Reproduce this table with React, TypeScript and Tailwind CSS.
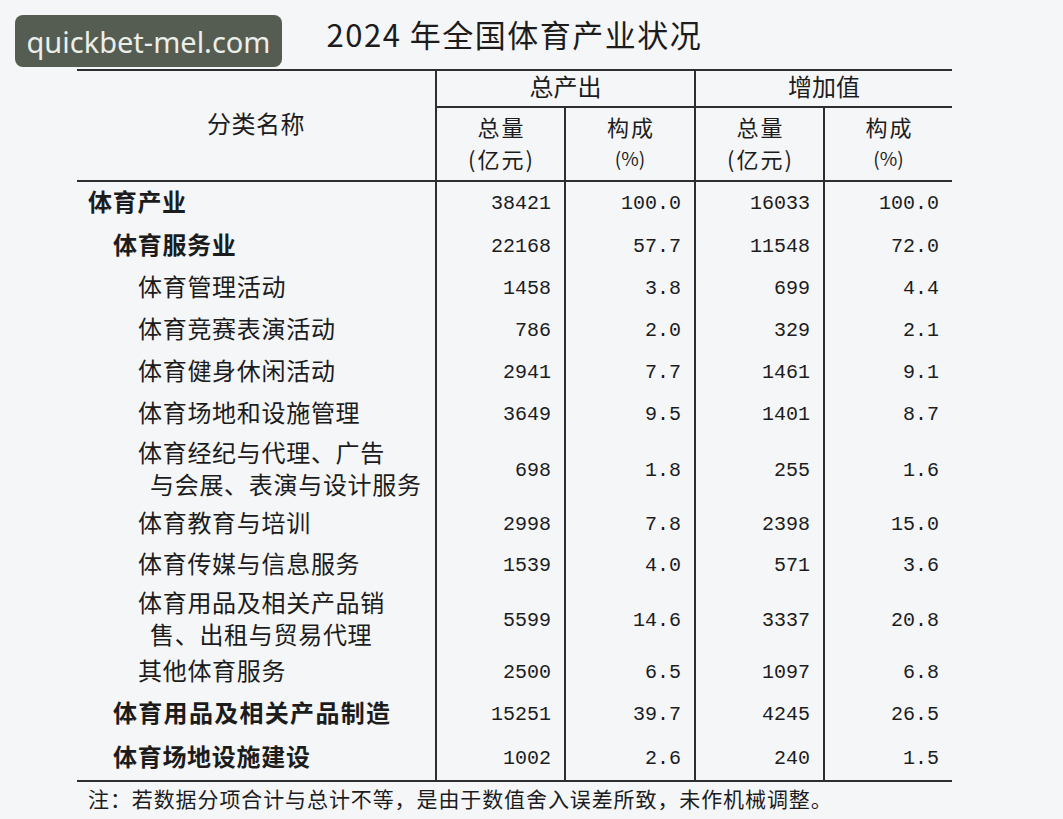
import React from 'react'

interface Row {
  name: string[]
  level: 0 | 1 | 2
  bold?: boolean
  values: string[]
  h: string
}

const rows: Row[] = [
  { name: ['体育产业'], level: 0, bold: true, values: ['38421', '100.0', '16033', '100.0'], h: 'h-[44px]' },
  { name: ['体育服务业'], level: 1, bold: true, values: ['22168', '57.7', '11548', '72.0'], h: 'h-[42px]' },
  { name: ['体育管理活动'], level: 2, values: ['1458', '3.8', '699', '4.4'], h: 'h-[42px]' },
  { name: ['体育竞赛表演活动'], level: 2, values: ['786', '2.0', '329', '2.1'], h: 'h-[42px]' },
  { name: ['体育健身休闲活动'], level: 2, values: ['2941', '7.7', '1461', '9.1'], h: 'h-[42px]' },
  { name: ['体育场地和设施管理'], level: 2, values: ['3649', '9.5', '1401', '8.7'], h: 'h-[42px]' },
  { name: ['体育经纪与代理、广告', '与会展、表演与设计服务'], level: 2, values: ['698', '1.8', '255', '1.6'], h: 'h-[68px]' },
  { name: ['体育教育与培训'], level: 2, values: ['2998', '7.8', '2398', '15.0'], h: 'h-[41px]' },
  { name: ['体育传媒与信息服务'], level: 2, values: ['1539', '4.0', '571', '3.6'], h: 'h-[41px]' },
  { name: ['体育用品及相关产品销', '售、出租与贸易代理'], level: 2, values: ['5599', '14.6', '3337', '20.8'], h: 'h-[66px]' },
  { name: ['其他体育服务'], level: 2, values: ['2500', '6.5', '1097', '6.8'], h: 'h-[41px]' },
  { name: ['体育用品及相关产品制造'], level: 1, bold: true, values: ['15251', '39.7', '4245', '26.5'], h: 'h-[44px]' },
  { name: ['体育场地设施建设'], level: 1, bold: true, values: ['1002', '2.6', '240', '1.5'], h: 'h-[43px]' },
]

const indent = ['pl-[11px]', 'pl-[36px]', 'pl-[61px]']
const cols = 'grid grid-cols-[358px_129px_130px_129px_129px]'
const line = 'border-[#2e2e2e]'

function NameCell({ row }: { row: Row }) {
  const wide = row.name[0] === '体育用品及相关产品制造'
  return (
    <div className={`flex flex-col justify-center pb-[6px] ${indent[row.level]} ${row.bold ? 'font-bold' : ''}`}>
      {row.name.map((part, i) => (
        <span
          key={part}
          className={`${row.name.length > 1 ? 'leading-[32px]' : 'leading-[30px]'} ${i > 0 ? 'pl-[12px]' : ''} ${
            wide ? 'tracking-[1.3px]' : 'tracking-[0.7px]'
          }`}
        >
          {part}
        </span>
      ))}
    </div>
  )
}

export default function App() {
  return (
    <div className="relative min-h-[819px] w-full bg-[#f5f6f8] text-[#1c1c1c] [font-family:'Noto_Sans_CJK_SC','Noto_Sans',sans-serif]">
      {/* watermark */}
      <div className="absolute left-[15px] top-[15px] flex h-[52px] w-[267px] items-center justify-center rounded-[8px] bg-[#555d52]">
        <span className="text-[29px] leading-none text-[#eceee9] [font-family:'Noto_Sans','Open_Sans',sans-serif]">
          quickbet-mel.com
        </span>
      </div>

      <div className="pl-[77px] pt-[14px]">
        <h1 className="w-[875px] text-center text-[31px] font-normal leading-[40px] tracking-[1.5px]">
          2024 年全国体育产业状况
        </h1>

        <div className={`mt-[15px] w-[875px] border-y-2 ${line} text-[24px]`}>
          {/* header */}
          <div className={`${cols} grid-rows-[37px_72px] border-b-2 ${line}`}>
            <div className="row-span-2 flex items-center justify-center pb-[6px] tracking-[0.5px]">分类名称</div>
            <div className={`col-span-2 flex items-center justify-center border-b-2 border-l-2 pb-[5px] ${line}`}>总产出</div>
            <div className={`col-span-2 flex items-center justify-center border-b-2 border-l-2 pb-[5px] ${line}`}>增加值</div>
            {['总量', '构成', '总量', '构成'].map((label, i) => (
              <div key={i} className={`flex flex-col items-center justify-center border-l-2 pb-[5px] ${line}`}>
                <span className="pl-[2px] text-[22px] leading-[32px] tracking-[2px]">{label}</span>
                <span className={`leading-[32px] ${label === '构成' ? 'text-[19px]' : 'pl-[2px] text-[22px] tracking-[2px]'}`}>
                  {label === '构成' ? '(%)' : '(亿元)'}
                </span>
              </div>
            ))}
          </div>

          {/* body */}
          {rows.map((row) => (
            <div key={row.name.join('')} className={`${cols} ${row.h}`}>
              <NameCell row={row} />
              {row.values.map((v, i) => (
                <div
                  key={i}
                  className={`flex items-center justify-end border-l-2 ${line} pr-[13px] text-[20px] leading-none [font-family:'Liberation_Mono',monospace]`}
                >
                  {v}
                </div>
              ))}
            </div>
          ))}
        </div>

        <p className="mt-[2px] pl-[11px] text-[21px] leading-[28px] tracking-[0.9px]">
          注：若数据分项合计与总计不等，是由于数值舍入误差所致，未作机械调整。
        </p>
      </div>
    </div>
  )
}
